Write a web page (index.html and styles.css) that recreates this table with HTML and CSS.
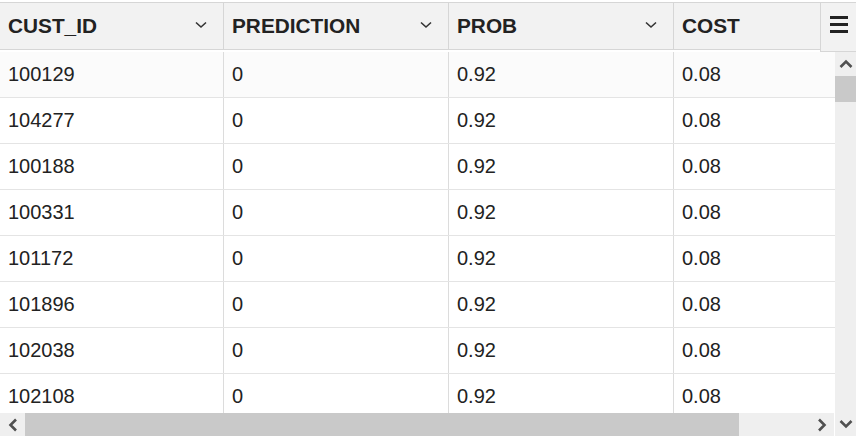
FILE: index.html
```html
<!DOCTYPE html>
<html>
<head>
<meta charset="utf-8">
<link rel="stylesheet" href="styles.css">
</head>
<body>
<div class="grid">
  <div class="header">
    <div class="hcell"><span>CUST_ID</span><svg class="chev" width="12" height="8" viewBox="0 0 12 8"><path d="M1 1.5 L6 6 L11 1.5" fill="none" stroke="#333" stroke-width="1.6"/></svg></div>
    <div class="hcell"><span>PREDICTION</span><svg class="chev" width="12" height="8" viewBox="0 0 12 8"><path d="M1 1.5 L6 6 L11 1.5" fill="none" stroke="#333" stroke-width="1.6"/></svg></div>
    <div class="hcell"><span>PROB</span><svg class="chev" width="12" height="8" viewBox="0 0 12 8"><path d="M1 1.5 L6 6 L11 1.5" fill="none" stroke="#333" stroke-width="1.6"/></svg></div>
    <div class="hcell"><span>COST</span><svg class="chev" width="12" height="8" viewBox="0 0 12 8"><path d="M1 1.5 L6 6 L11 1.5" fill="none" stroke="#333" stroke-width="1.6"/></svg></div>
    <div class="menu">
      <div class="bar"></div><div class="bar"></div><div class="bar"></div>
    </div>
  </div>
  <div class="main">
    <div class="left">
      <div class="viewport">
        <div class="row first"><div class="cell">100129</div><div class="cell">0</div><div class="cell">0.92</div><div class="cell">0.08</div></div>
        <div class="row"><div class="cell">104277</div><div class="cell">0</div><div class="cell">0.92</div><div class="cell">0.08</div></div>
        <div class="row"><div class="cell">100188</div><div class="cell">0</div><div class="cell">0.92</div><div class="cell">0.08</div></div>
        <div class="row"><div class="cell">100331</div><div class="cell">0</div><div class="cell">0.92</div><div class="cell">0.08</div></div>
        <div class="row"><div class="cell">101172</div><div class="cell">0</div><div class="cell">0.92</div><div class="cell">0.08</div></div>
        <div class="row"><div class="cell">101896</div><div class="cell">0</div><div class="cell">0.92</div><div class="cell">0.08</div></div>
        <div class="row"><div class="cell">102038</div><div class="cell">0</div><div class="cell">0.92</div><div class="cell">0.08</div></div>
        <div class="row"><div class="cell">102108</div><div class="cell">0</div><div class="cell">0.92</div><div class="cell">0.08</div></div>
      </div>
      <div class="hscroll">
        <div class="arrow"><svg width="10" height="14" viewBox="0 0 10 14"><path d="M8 1.5 L2.5 7 L8 12.5" fill="none" stroke="#505050" stroke-width="2.6"/></svg></div>
        <div class="htrack"><div class="hthumb"></div></div>
        <div class="arrow"><svg width="10" height="14" viewBox="0 0 10 14"><path d="M2 1.5 L7.5 7 L2 12.5" fill="none" stroke="#505050" stroke-width="2.6"/></svg></div>
      </div>
    </div>
    <div class="vscroll">
      <div class="varrow"><svg width="14" height="10" viewBox="0 0 14 10"><path d="M1.5 8 L7 2.5 L12.5 8" fill="none" stroke="#505050" stroke-width="2.6"/></svg></div>
      <div class="vtrack"><div class="vthumb"></div></div>
      <div class="varrow"><svg width="14" height="10" viewBox="0 0 14 10"><path d="M1.5 2 L7 7.5 L12.5 2" fill="none" stroke="#505050" stroke-width="2.6"/></svg></div>
    </div>
  </div>
</div>
</body>
</html>
```
FILE: styles.css
```css
html, body {
  margin: 0;
  padding: 0;
  background: #fff;
}
body {
  font-family: "Liberation Sans", Arial, sans-serif;
  font-size: 20px;
  color: #222;
  width: 856px;
  height: 436px;
  overflow: hidden;
}
.grid {
  margin-top: 2px;
  width: 856px;
  position: relative;
}
.header {
  display: flex;
  height: 48px;
  box-sizing: border-box;
  border-top: 1px solid #d6d6d6;
  border-bottom: 1px solid #d6d6d6;
  background: #f2f2f2;
  overflow: hidden;
}
.hcell {
  flex: 0 0 225px;
  box-sizing: border-box;
  border-right: 1px solid #d6d6d6;
  display: flex;
  align-items: center;
  justify-content: space-between;
  padding: 0 16px 0 8px;
  font-weight: bold;
  font-size: 20.8px;
}
.hcell:first-child,
.cell:first-child {
  flex-basis: 224px;
}
.chev {
  display: block;
  margin-top: -2px;
}
.menu {
  position: absolute;
  top: 0;
  right: 0;
  width: 36px;
  height: 50px;
  box-sizing: border-box;
  background: #f2f2f2;
  border-top: 1px solid #d6d6d6;
  border-left: 1px solid #d6d6d6;
  border-bottom: 1px solid #d6d6d6;
  display: flex;
  flex-direction: column;
  justify-content: center;
  align-items: center;
  gap: 4px;
  padding-bottom: 5px;
}
.bar {
  width: 18px;
  height: 3px;
  background: #222;
}
.main {
  display: flex;
  margin-top: 2px;
  height: 384px;
}
.left {
  width: 835px;
  display: flex;
  flex-direction: column;
}
.viewport {
  height: 361px;
  overflow: hidden;
}
.row {
  display: flex;
  height: 46px;
  box-sizing: border-box;
  border-bottom: 1px solid #e4e4e4;
  background: #fff;
}
.row.first {
  background: #fbfbfb;
}
.cell {
  flex: 0 0 225px;
  box-sizing: border-box;
  border-right: 1px solid #dcdcdc;
  padding-left: 8px;
  display: flex;
  align-items: center;
}
.hscroll {
  height: 23px;
  margin-right: 1px;
  background: #efefef;
  display: flex;
}
.arrow {
  width: 25px;
  display: flex;
  align-items: center;
  justify-content: center;
}
.htrack {
  flex: 1;
}
.hthumb {
  width: 714px;
  height: 100%;
  background: #c9c9c9;
}
.vscroll {
  width: 21px;
  background: #efefef;
  display: flex;
  flex-direction: column;
}
.varrow {
  height: 24px;
  display: flex;
  align-items: center;
  justify-content: center;
}
.vtrack {
  flex: 1;
}
.vthumb {
  height: 26px;
  background: #c9c9c9;
}
```
